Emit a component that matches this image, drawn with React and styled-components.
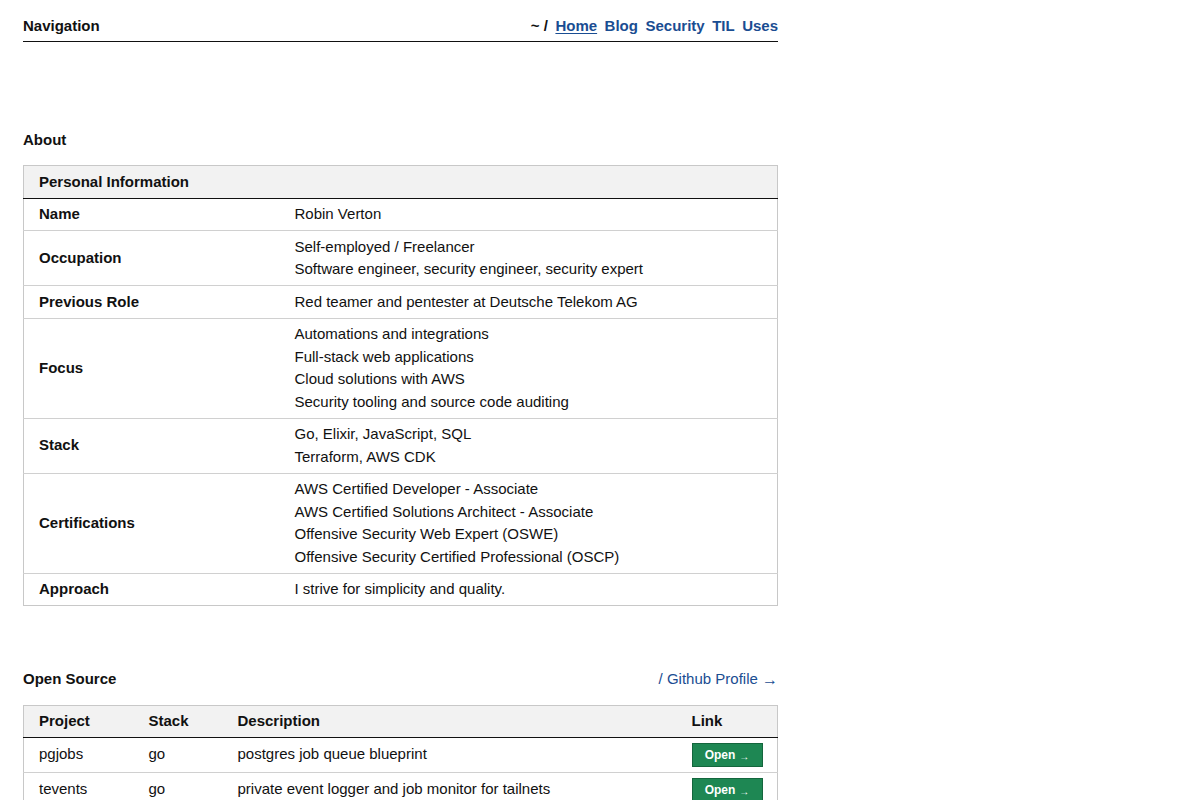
import styled, { createGlobalStyle } from 'styled-components';

const GlobalStyle = createGlobalStyle`
   body {
      margin: 0;
      background: #fff;
      color: #111;
      font-family: 'Liberation Sans', Arial, sans-serif;
      font-size: 15px;
      line-height: 1.5;
   }
`;

const personal = [
   { label: 'Name', lines: ['Robin Verton'] },
   { label: 'Occupation', lines: ['Self-employed / Freelancer', 'Software engineer, security engineer, security expert'] },
   { label: 'Previous Role', lines: ['Red teamer and pentester at Deutsche Telekom AG'] },
   {
      label: 'Focus',
      lines: [
         'Automations and integrations',
         'Full-stack web applications',
         'Cloud solutions with AWS',
         'Security tooling and source code auditing',
      ],
   },
   { label: 'Stack', lines: ['Go, Elixir, JavaScript, SQL', 'Terraform, AWS CDK'] },
   {
      label: 'Certifications',
      lines: [
         'AWS Certified Developer - Associate',
         'AWS Certified Solutions Architect - Associate',
         'Offensive Security Web Expert (OSWE)',
         'Offensive Security Certified Professional (OSCP)',
      ],
   },
   { label: 'Approach', lines: ['I strive for simplicity and quality.'] },
];

const projects = [
   { name: 'pgjobs', stack: 'go', description: 'postgres job queue blueprint' },
   { name: 'tevents', stack: 'go', description: 'private event logger and job monitor for tailnets' },
];

const navLinks = ['Home', 'Blog', 'Security', 'TIL', 'Uses'];

export default function App() {
   return (
      <>
         <GlobalStyle />
         <Page>
            <Nav>
               <NavTitle>Navigation</NavTitle>
               <NavLinks>
                  <Crumb>~ /</Crumb>
                  {navLinks.map((link) => (
                     <NavLink key={link} href='#' $active={link === 'Home'}>
                        {link}
                     </NavLink>
                  ))}
               </NavLinks>
            </Nav>

            <Section $top={87}>
               <SectionHead>
                  <Heading>About</Heading>
               </SectionHead>
               <Table>
                  <colgroup>
                     <col style={{ width: 256 }} />
                     <col />
                  </colgroup>
                  <thead>
                     <tr>
                        <Th colSpan={2}>Personal Information</Th>
                     </tr>
                  </thead>
                  <tbody>
                     {personal.map((row) => (
                        <tr key={row.label}>
                           <Td $bold>{row.label}</Td>
                           <Td>
                              {row.lines.map((line) => (
                                 <Line key={line}>{line}</Line>
                              ))}
                           </Td>
                        </tr>
                     ))}
                  </tbody>
               </Table>
            </Section>

            <Section $top={62}>
               <SectionHead>
                  <Heading>Open Source</Heading>
                  <ProfileLink href='#'>
                     / Github Profile <Arrow>→</Arrow>
                  </ProfileLink>
               </SectionHead>
               <Table>
                  <colgroup>
                     <col style={{ width: 110 }} />
                     <col style={{ width: 89 }} />
                     <col />
                     <col style={{ width: 101 }} />
                  </colgroup>
                  <thead>
                     <tr>
                        <Th>Project</Th>
                        <Th>Stack</Th>
                        <Th>Description</Th>
                        <Th>Link</Th>
                     </tr>
                  </thead>
                  <tbody>
                     {projects.map((p) => (
                        <tr key={p.name}>
                           <Td>{p.name}</Td>
                           <Td>{p.stack}</Td>
                           <Td>{p.description}</Td>
                           <Td $tight>
                              <OpenButton href='#'>
                                 Open <small>→</small>
                              </OpenButton>
                           </Td>
                        </tr>
                     ))}
                  </tbody>
               </Table>
            </Section>
         </Page>
      </>
   );
}

const Page = styled.main`
   width: 755px;
   padding: 15px 0 40px 23px;
`;

const Nav = styled.nav`
   display: flex;
   justify-content: space-between;
   align-items: center;
   padding-bottom: 3px;
   border-bottom: 1px solid #111;
`;

const NavTitle = styled.h2`
   margin: 0;
   font-size: 15px;
   font-weight: bold;
   line-height: 22.5px;
`;

const NavLinks = styled.div`
   display: flex;
   gap: 7.5px;
   font-weight: bold;
   line-height: 22.5px;
`;

const Crumb = styled.span`
   color: #111;
`;

const NavLink = styled.a`
   color: #1a4d92;
   text-decoration: ${(p) => (p.$active ? 'underline' : 'none')};
   text-underline-offset: 2px;
`;

const Section = styled.section`
   margin-top: ${(p) => p.$top}px;
`;

const SectionHead = styled.div`
   display: flex;
   justify-content: space-between;
   align-items: center;
   margin-bottom: 14px;
`;

const Heading = styled.h3`
   margin: 0;
   font-size: 15px;
   font-weight: bold;
   line-height: 22.5px;
`;

const ProfileLink = styled.a`
   color: #1a4d92;
   text-decoration: none;
   line-height: 22.5px;
`;

const Arrow = styled.span`
   font-size: 16px;
   position: relative;
   top: 1px;
`;

const Table = styled.table`
   width: 100%;
   border-collapse: collapse;
   border: 1px solid #c8c8c8;
   table-layout: fixed;
`;

const Th = styled.th`
   text-align: left;
   font-weight: bold;
   background: #f2f2f2;
   padding: 4.5px 15px;
   border-bottom: 1px solid #111;
`;

const Td = styled.td`
   padding: ${(p) => (p.$tight ? '5px 15px' : '4.5px 15px')};
   vertical-align: ${(p) => (p.$bold ? 'middle' : 'top')};
   font-weight: ${(p) => (p.$bold ? 'bold' : 'normal')};
   border-top: 1px solid #d0d0d0;
`;

const Line = styled.div``;

const OpenButton = styled.a`
   display: inline-flex;
   align-items: center;
   justify-content: center;
   gap: 4px;
   width: 71px;
   height: 24px;
   box-sizing: border-box;
   background: #1e8753;
   border: 1px solid #14663d;
   color: #fff;
   font-size: 12px;
   font-weight: bold;
   text-decoration: none;

   small {
      font-size: 10px;
      position: relative;
      top: 1px;
   }
`;
